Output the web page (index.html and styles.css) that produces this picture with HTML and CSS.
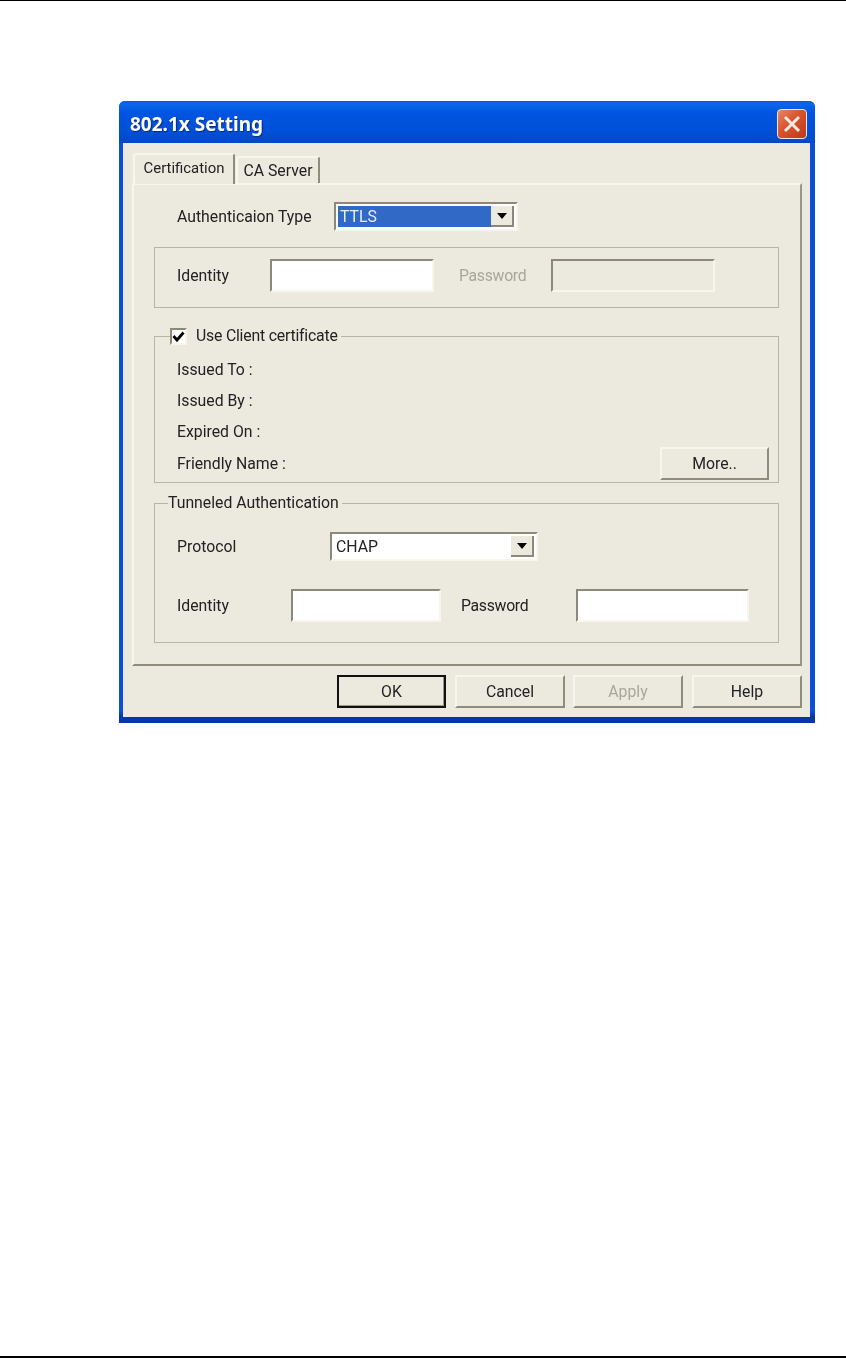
FILE: index.html
```html
<!DOCTYPE html>
<html lang="en">
  <head>
    <meta charset="UTF-8" />
    <title>802.1x Setting</title>
    <link rel="stylesheet" href="styles.css">
  </head>
  <body>
    <div class="rule-top"></div>

    <div class="window">
      <div class="titlebar">
        <span class="title">802.1x Setting</span>
        <div class="close-btn">
          <svg width="18" height="18" viewBox="0 0 18 18">
            <path d="M2 2 L16 16 M16 2 L2 16" stroke="#f6ebe0" stroke-width="3" fill="none" />
          </svg>
        </div>
      </div>

      <div class="client">
        <div class="tabs">
          <div class="tab active">Certification</div>
          <div class="tab">CA Server</div>
        </div>

        <div class="panel">
          <div class="auth-row">
            <label class="auth-label">Authenticaion Type</label>
            <div class="combo auth-combo">
              <div class="combo-value selected">TTLS</div>
              <div class="combo-arrow"><span class="triangle"></span></div>
            </div>
          </div>

          <div class="identity-box">
            <label class="identity-label">Identity</label>
            <input class="field field-164" type="text" />
            <label class="password-label disabled">Password</label>
            <input class="field field-164 field-off" type="text" disabled />
          </div>

          <fieldset class="group cert-group">
            <legend class="check-legend">
              <span class="checkbox">
                <svg width="13" height="13" viewBox="0 0 13 13">
                  <path d="M1.5 6 L5 10 L11.5 2.5" stroke="#000" stroke-width="2.8" fill="none" />
                </svg>
              </span>
              Use Client certificate
            </legend>
            <div class="info-row">Issued To :</div>
            <div class="info-row">Issued By :</div>
            <div class="info-row">Expired On :</div>
            <div class="info-row last-row">
              <span>Friendly Name :</span>
              <button class="btn more-btn" type="button">More..</button>
            </div>
          </fieldset>

          <fieldset class="group tunnel-group">
            <legend class="text-legend">Tunneled Authentication</legend>
            <div class="protocol-row">
              <label class="protocol-label">Protocol</label>
              <div class="combo protocol-combo">
                <div class="combo-value">CHAP</div>
                <div class="combo-arrow"><span class="triangle"></span></div>
              </div>
            </div>
            <div class="tunnel-row">
              <label class="tunnel-identity">Identity</label>
              <input class="field field-150" type="text" />
              <label class="tunnel-password">Password</label>
              <input class="field field-173" type="text" />
            </div>
          </fieldset>
        </div>

        <div class="footer">
          <button class="btn btn-default" type="button">OK</button>
          <button class="btn" type="button">Cancel</button>
          <button class="btn btn-off" type="button" disabled>Apply</button>
          <button class="btn" type="button">Help</button>
        </div>
      </div>
    </div>

    <div class="rule-bottom"></div>
  </body>
</html>
```

FILE: styles.css
```css
* {
  margin: 0;
  padding: 0;
  box-sizing: border-box;
}

body {
  display: flex;
  flex-direction: column;
  height: 100vh;
  overflow: hidden;
  background-color: #fff;
  font-family: Roboto, "Liberation Sans", Arial, sans-serif;
  font-size: 15.8px;
  color: #222;
}

.rule-top {
  height: 1px;
  background-color: #000;
}

.rule-bottom {
  height: 2px;
  margin-top: auto;
  background-color: #000;
}

/* Window frame */
.window {
  width: 696px;
  height: 622px;
  margin: 100px 0 0 119px;
  display: flex;
  flex-direction: column;
  border-radius: 6px 6px 0 0;
  overflow: hidden;
  background: linear-gradient(180deg, #0a50d8 0%, #0a50d8 98%, #0636a8 99%);
  filter: blur(0.4px);
}

.titlebar {
  height: 42px;
  padding: 4px 8px 0 11px;
  display: flex;
  align-items: center;
  justify-content: space-between;
  background: linear-gradient(
    180deg,
    #0a5ddc 0%,
    #0a66ea 8%,
    #0054e0 30%,
    #0050d8 70%,
    #0048c8 100%
  );
}

.title {
  font-family: "Noto Sans", "Liberation Sans", sans-serif;
  font-size: 19px;
  font-weight: 700;
  color: #fff;
  text-shadow: 1px 1px 1px #0a2a80;
}

.close-btn {
  width: 30px;
  height: 30px;
  display: flex;
  align-items: center;
  justify-content: center;
  border: 1px solid #ece8e0;
  border-radius: 4px;
  background: linear-gradient(135deg, #e8866a 0%, #d9522c 45%, #bb3a18 100%);
}

.client {
  flex: 1;
  margin: 0 5px 6px 4px;
  padding: 10px 8px 0 9px;
  background-color: #ece9df;
}

/* Tabs */
.tabs {
  height: 30px;
  margin-left: 1px;
  display: flex;
  align-items: flex-end;
  gap: 1px;
}

.tab {
  height: 27px;
  width: 84px;
  display: flex;
  align-items: center;
  justify-content: center;
  border-top: 2px solid #f7f5ec;
  border-left: 2px solid #f7f5ec;
  border-right: 2px solid #8f8c7c;
  border-radius: 3px 3px 0 0;
}

.tab.active {
  position: relative;
  height: 31px;
  width: 102px;
  margin-bottom: -1px;
  padding-bottom: 3px;
  font-size: 14.9px;
  background-color: #ece9df;
  z-index: 1;
}

/* Tab page */
.panel {
  height: 483px;
  padding: 17px 21px 0 20px;
  border: 2px solid;
  border-color: #f7f5ec #9a9788 #8f8c7c #f7f5ec;
}

.auth-row {
  margin-left: 23px;
  display: flex;
  align-items: center;
}

.auth-label {
  width: 157px;
}

.combo {
  height: 29px;
  display: flex;
  padding: 2px;
  background-color: #fff;
  border: 2px solid;
  border-color: #8c897a #f7f5ec #f7f5ec #8c897a;
}

.auth-combo {
  width: 184px;
}

.protocol-combo {
  width: 208px;
}

.combo-value {
  flex: 1;
  padding-left: 2px;
  line-height: 21px;
}

.combo-value.selected {
  background-color: #3169c6;
  color: #e8eef8;
}

.combo-arrow {
  width: 23px;
  display: flex;
  align-items: center;
  justify-content: center;
  background-color: #ece9df;
  border-right: 2px solid #8c897a;
  border-bottom: 2px solid #8c897a;
}

.triangle {
  width: 0;
  height: 0;
  border-left: 5px solid transparent;
  border-right: 5px solid transparent;
  border-top: 6px solid #000;
}

/* Inputs */
.field {
  height: 33px;
  background-color: #fff;
  border: 2px solid;
  border-color: #8c897a #f7f5ec #f7f5ec #8c897a;
  outline: none;
}

.field-off {
  background-color: #ece9df;
}

.field-164 {
  width: 164px;
}

.field-150 {
  width: 150px;
}

.field-173 {
  width: 173px;
}

/* Group boxes */
.identity-box {
  height: 61px;
  margin-top: 16px;
  padding: 11px 0 0 22px;
  display: flex;
  align-items: flex-start;
  border: 1px solid #b7b5a5;
}

.identity-box label {
  line-height: 33px;
}

.identity-label {
  width: 93px;
}

.password-label {
  width: 92px;
  margin-left: 25px;
  letter-spacing: -0.3px;
}

.disabled {
  color: #a9a799;
}

.group {
  padding: 0 9px 0 22px;
  border: 1px solid #b7b5a5;
}

.cert-group {
  margin-top: 19px;
  padding-top: 9px;
  padding-bottom: 2px;
}

.tunnel-group {
  margin-top: 11px;
  padding-top: 20px;
  padding-bottom: 20px;
}

.check-legend {
  height: 18px;
  margin-left: -7px;
  padding-right: 3px;
  display: flex;
  align-items: center;
  line-height: 18px;
  letter-spacing: -0.2px;
}

.text-legend {
  height: 18px;
  margin-left: -9px;
  padding-right: 3px;
  line-height: 18px;
}

.checkbox {
  width: 17px;
  height: 17px;
  margin-right: 9px;
  display: flex;
  align-items: center;
  justify-content: center;
  background-color: #fff;
  border: 2px solid;
  border-color: #8c897a #f7f5ec #f7f5ec #8c897a;
}

.info-row {
  height: 31px;
  line-height: 31px;
}

.last-row {
  height: 33px;
  display: flex;
  align-items: center;
  justify-content: space-between;
}

.protocol-row {
  display: flex;
  align-items: center;
}

.protocol-label {
  width: 153px;
}

.tunnel-row {
  margin-top: 28px;
  display: flex;
  align-items: center;
}

.tunnel-identity {
  width: 114px;
}

.tunnel-password {
  width: 115px;
  margin-left: 20px;
  letter-spacing: -0.3px;
}

/* Buttons */
.btn {
  width: 110px;
  height: 33px;
  font-family: inherit;
  font-size: inherit;
  color: #222;
  background-color: #ece9df;
  border: 2px solid;
  border-color: #f7f5ec #8f8c7c #8f8c7c #f7f5ec;
}

.more-btn {
  width: 109px;
}

.btn-default {
  width: 109px;
  border-color: #111;
  box-shadow: inset -1px -1px 0 #9a9788;
}

.btn-off {
  color: #a9a799;
}

.footer {
  margin-top: 9px;
  display: flex;
  justify-content: flex-end;
  gap: 8px;
}

.footer .btn:nth-child(2) {
  margin-left: 1px;
}

.footer .btn:nth-child(4) {
  margin-left: 1px;
}
```
